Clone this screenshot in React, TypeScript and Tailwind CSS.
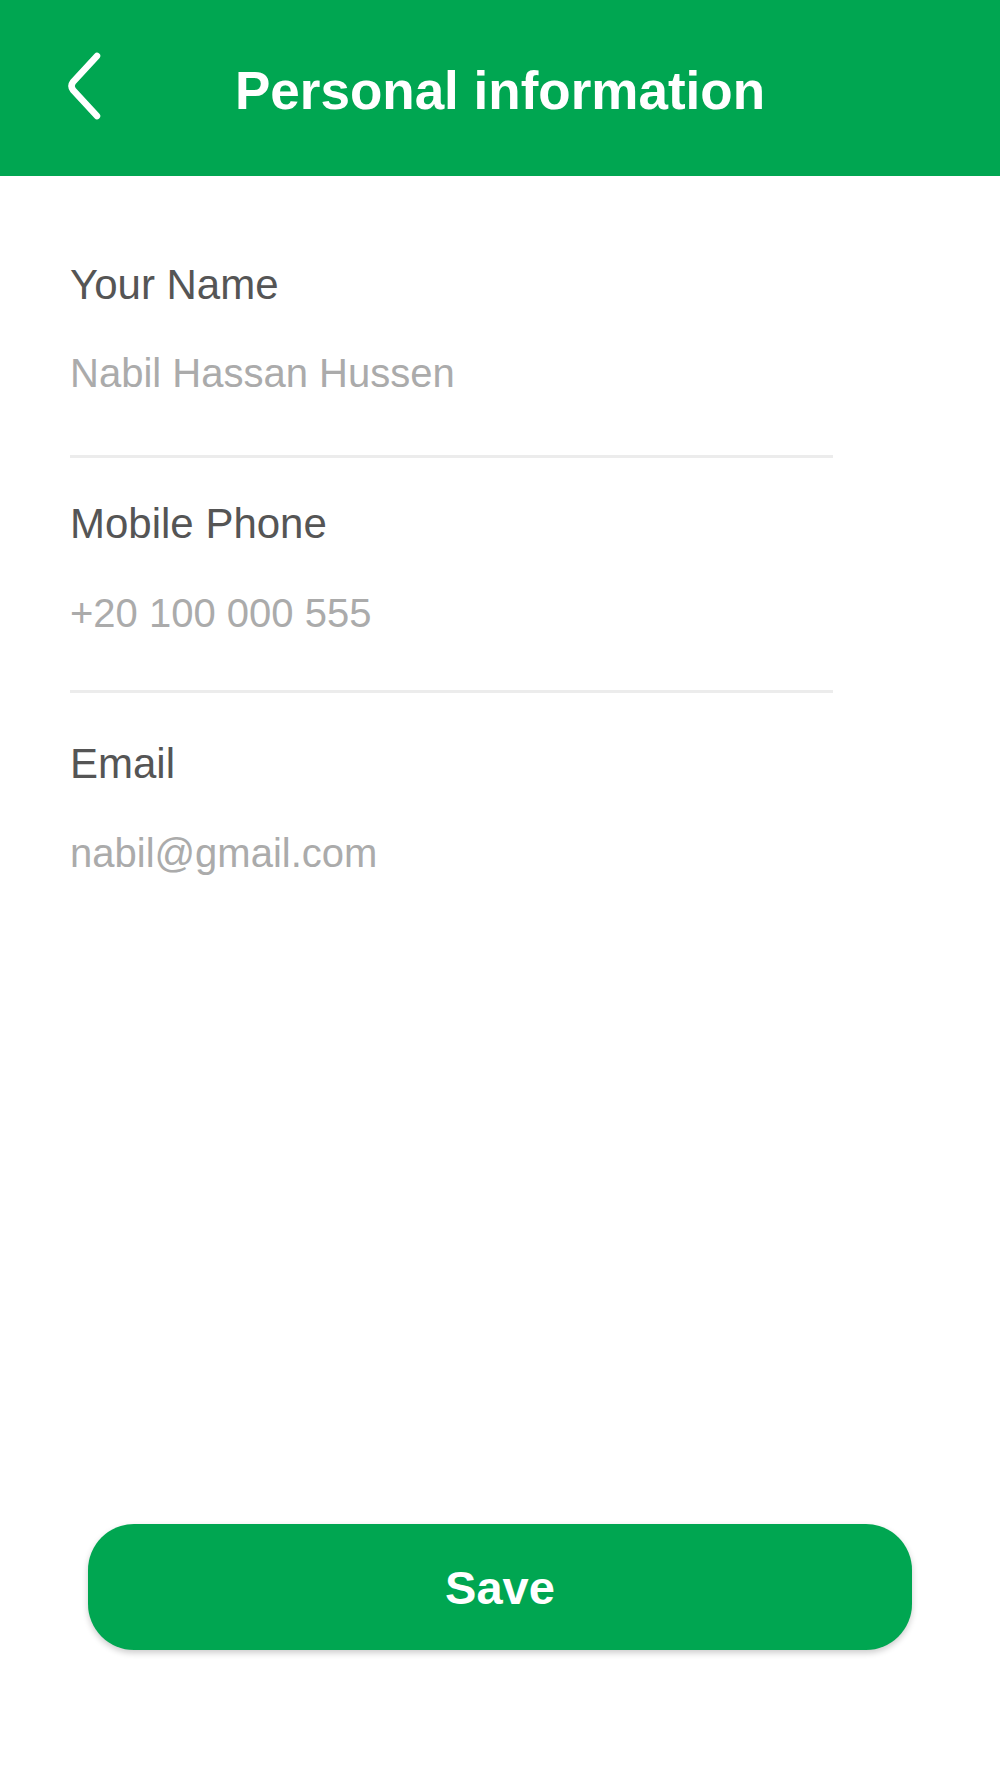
const fields = [
  { label: "Your Name", value: "Nabil Hassan Hussen" },
  { label: "Mobile Phone", value: "+20 100 000 555" },
  { label: "Email", value: "nabil@gmail.com" },
];

const BackIcon = () => (
  <svg width="42" height="72" viewBox="0 0 42 72" fill="none">
    <path
      d="M34 6 L10 32 Q7 36 10 40 L34 66"
      stroke="white"
      strokeWidth="6.5"
      strokeLinecap="round"
      strokeLinejoin="round"
    />
  </svg>
);

const App = () => {
  return (
    <div
      className="flex h-[1779px] w-full flex-col bg-white"
      style={{ fontFamily: '"Liberation Sans", Arial, sans-serif' }}
    >
      <header className="relative flex h-[176px] items-center justify-center bg-[#00a651] pt-[5px]">
        <button className="absolute left-[63px] top-[50px]">
          <BackIcon />
        </button>
        <h1 className="text-[53px] font-bold leading-none text-white">
          Personal information
        </h1>
      </header>

      <div className="px-[70px] pt-[88px]">
        <div className="text-[42px] leading-none text-[#555555]">
          {fields[0].label}
        </div>
        <div className="mt-[47px] text-[40px] leading-none text-[#ababab]">
          {fields[0].value}
        </div>
        <div className="mt-[62px] h-[3px] w-[763px] bg-[#ececec]" />

        <div className="mt-[45px] text-[42px] leading-none text-[#555555]">
          {fields[1].label}
        </div>
        <div className="mt-[48px] text-[40px] leading-none text-[#ababab]">
          {fields[1].value}
        </div>
        <div className="mt-[57px] h-[3px] w-[763px] bg-[#ececec]" />

        <div className="mt-[50px] text-[42px] leading-none text-[#555555]">
          {fields[2].label}
        </div>
        <div className="mt-[48px] text-[40px] leading-none text-[#ababab]">
          {fields[2].value}
        </div>
      </div>

      <button className="mx-[88px] mb-[129px] mt-auto flex h-[126px] items-center justify-center rounded-[46px] bg-[#00a651] shadow-[0_3px_6px_rgba(0,0,0,0.2)]">
        <span className="text-[47px] font-bold leading-none text-white">
          Save
        </span>
      </button>
    </div>
  );
};

export default App;
